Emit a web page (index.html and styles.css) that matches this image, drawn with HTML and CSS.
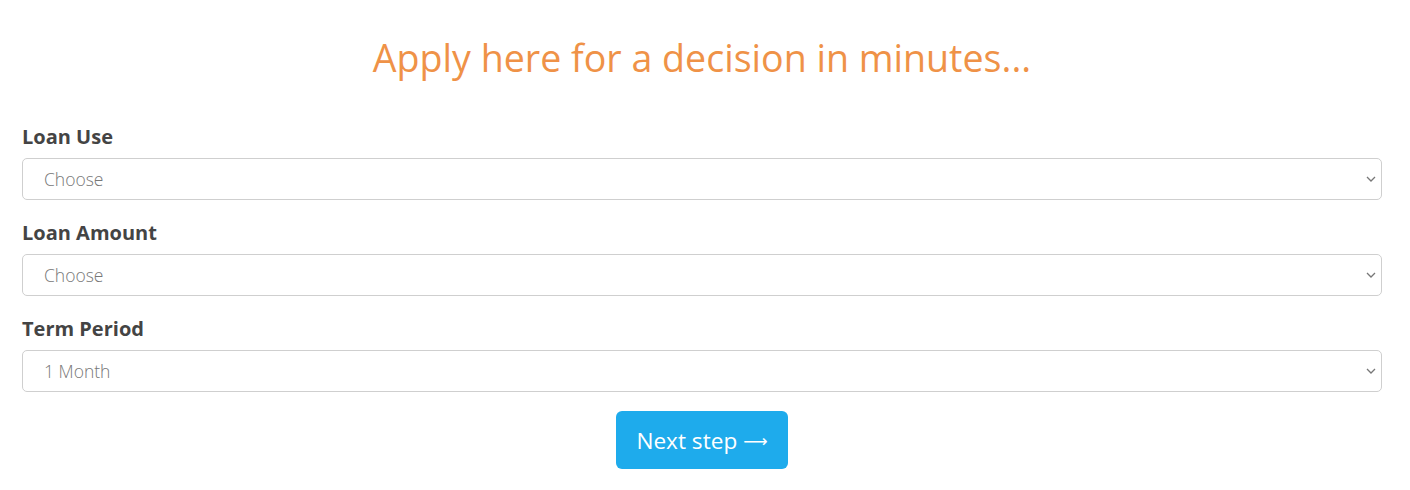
FILE: index.html
```html
<!DOCTYPE html>
<html lang="en">
<head>
<meta charset="utf-8">
<title>Apply</title>
<link rel="stylesheet" href="styles.css">
</head>
<body>
<main class="page">
  <h1 class="title">Apply here for a decision in minutes...</h1>
  <form class="form">
    <div class="field">
      <label class="label" for="use">Loan Use</label>
      <div class="select-wrap">
        <select id="use" class="select"><option>Choose</option></select>
        <svg class="chev" width="10" height="6" viewBox="0 0 10 6"><path d="M1 1l4 4 4-4" fill="none" stroke="#777" stroke-width="1.3"/></svg>
      </div>
    </div>
    <div class="field">
      <label class="label" for="amount">Loan Amount</label>
      <div class="select-wrap">
        <select id="amount" class="select"><option>Choose</option></select>
        <svg class="chev" width="10" height="6" viewBox="0 0 10 6"><path d="M1 1l4 4 4-4" fill="none" stroke="#777" stroke-width="1.3"/></svg>
      </div>
    </div>
    <div class="field">
      <label class="label" for="term">Term Period</label>
      <div class="select-wrap">
        <select id="term" class="select"><option>1 Month</option></select>
        <svg class="chev" width="10" height="6" viewBox="0 0 10 6"><path d="M1 1l4 4 4-4" fill="none" stroke="#777" stroke-width="1.3"/></svg>
      </div>
    </div>
    <div class="actions">
      <button type="button" class="btn">Next step <span class="arrow">&#x27F6;</span></button>
    </div>
  </form>
</main>
</body>
</html>
```
FILE: styles.css
```css
* { box-sizing: border-box; }
body {
  margin: 0;
  background: #fff;
  font-family: "Open Sans", "Noto Sans", sans-serif;
}
.page {
  padding: 0 28px 0 22px;
}
.title {
  margin: 0;
  padding-top: 34px;
  text-align: center;
  font-weight: 400;
  font-size: 37.6px;
  line-height: 48px;
  color: #ef9247;
}
.form {
  margin-top: 41px;
  display: flex;
  flex-direction: column;
}
.field {
  display: flex;
  flex-direction: column;
  margin-bottom: 19px;
}
.label {
  font-weight: 700;
  font-size: 20px;
  line-height: 28px;
  color: #444;
  margin-bottom: 7px;
}
.select-wrap {
  position: relative;
}
.select {
  appearance: none;
  -webkit-appearance: none;
  width: 100%;
  height: 42px;
  border: 1px solid #cfcfcf;
  border-radius: 5px;
  background: #fff;
  padding: 0 21px;
  font-family: "Open Sans", sans-serif;
  font-weight: 300;
  font-size: 17.5px;
  color: #777;
}
.chev {
  position: absolute;
  right: 6px;
  top: 18px;
}
.actions {
  display: flex;
  justify-content: center;
}
.btn {
  display: flex;
  align-items: center;
  justify-content: center;
  gap: 6px;
  width: 172px;
  height: 58px;
  border: 0;
  border-radius: 6px;
  background: #1eabec;
  color: #fff;
  font-family: "Open Sans", sans-serif;
  font-size: 22.6px;
  font-weight: 400;
}
.arrow {
  font-family: "DejaVu Sans", sans-serif;
  font-size: 17px;
  position: relative;
  top: 1px;
}
```
